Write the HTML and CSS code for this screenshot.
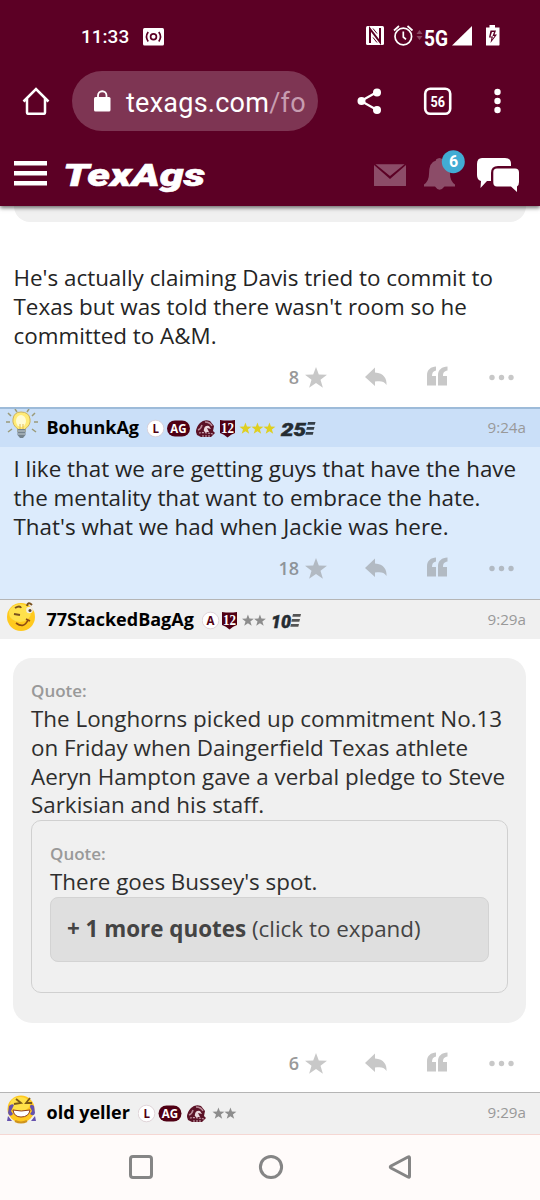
FILE: index.html
```html
<!DOCTYPE html>
<html lang="en">
<head>
<meta charset="utf-8">
<title>TexAgs</title>
<link rel="stylesheet" href="styles.css">
</head>
<body>
<svg class="defs" width="0" height="0">
  <defs>
    <path id="star" d="M11 0l2.800 7.600 8.200.2-6.500 5 2.400 7.900L11 16l-6.900 4.700 2.400-7.900L0 7.800l8.200-.2z"/>
    <g id="actions">
      <use href="#star" x="0" y="4"/>
      <path d="M60 14L70 4.500V9.500C79 10 82 16 81.500 22C79 18 76 18 70 18.500V23z"/>
      <path d="M122 22.500V12C122 7 126 3.500 131 3.500V7.500C128 8 127 10 127 13H131V22.500zM133 22.500V12C133 7 137 3.500 142.500 3.500V7.500C139 8 138 10 138 13H142V22.500z"/>
      <circle cx="187" cy="14.500" r="2.700"/><circle cx="196.500" cy="14.500" r="2.700"/><circle cx="206" cy="14.500" r="2.700"/>
    </g>
    <g id="ag"><rect width="23" height="16" rx="8" fill="#500014"/><text class="badge-text" x="11.500" y="12.200" font-size="11.500" fill="#fff">AG</text></g>
    <g id="disc"><circle cx="8.500" cy="8.500" r="8.300" fill="#fff" stroke="#d5c6cc" stroke-width=".7"/></g>
    <g id="shield"><path d="M0 1Q7.500 2 15 1V14Q11 15 7.500 18.500Q4 15 0 14z" fill="#500014"/><text class="serif-text" x="7.500" y="13.500" font-size="14" textLength="13" lengthAdjust="spacingAndGlyphs" fill="#fff">12</text></g>
    <g id="ring">
      <path d="M0 12Q0 7 4 3Q8-1 14 1L18 6L17 11L19 13L15 17H5L1 15z" fill="#5b1226"/>
      <path d="M2 10Q5 9 6 5M9 2Q14 2 16 6" fill="none" stroke="#b98b98" stroke-width="1.500"/>
      <path d="M8 9Q9 5 13 6L15 9L11 8L13 12L9 12Q7 11 8 9z" fill="#ead8dd"/>
      <path d="M3 13Q9 12 17 14M6 16h9" fill="none" stroke="#c9a5b0" stroke-width="1.200" stroke-dasharray="2 1"/>
    </g>
  </defs>
</svg>

<header class="top">
  <div class="status">
    <span class="clock">11:33</span>
    <svg class="cast" width="21" height="18" viewBox="0 0 21 18"><rect width="21" height="17.500" rx="1.500" fill="#fff"/><g fill="none" stroke="#5c0025" stroke-width="1.700"><circle cx="10.500" cy="8.700" r="2.900"/><path d="M5.200 4Q1.800 8.700 5.200 13.400M15.800 4Q19.200 8.700 15.800 13.400"/></g></svg>
    <svg class="system" width="140" height="30" viewBox="0 -1 140 30">
      <rect x="1" y="3" width="18" height="19" rx="1.500" fill="#fff"/>
      <path d="M5 20V6L15 19V5" fill="none" stroke="#5c0025" stroke-width="2"/><path d="M8 5.500L12 10.500M8 14.500L12 19.500" stroke="#5c0025" stroke-width="1"/>
      <g fill="none" stroke="#fff" stroke-width="1.700"><circle cx="38.300" cy="13.500" r="8.300"/><path d="M38.300 8.500V14L41 16.300M29 7.500L34 3M47.500 7.500L42.500 3"/></g>
      <path d="M51.500 11L54.500 7L57.500 11zM51.500 13L54.500 17L57.500 13z" fill="#8a4863"/>
      <text class="signal-text" x="59" y="23.300" textLength="24" lengthAdjust="spacingAndGlyphs">5G</text>
      <path d="M87 22.500L107 3V22.500z" fill="#fff"/>
      <path d="M121 4.500H124.500V2H130V4.500H134.500V21.500Q134.500 22.500 134 22.500H121.500Q121 22.500 121 22z" fill="#fff"/>
      <path d="M125.500 7.500H131L129.500 11.500H132L125.500 20L126.500 14.500H124z" fill="#5c0025"/><path d="M127 9H129L127.500 13H129.500L127.200 16.500L128 13.500H125.500z" fill="#fff"/>
    </svg>
  </div>
  <div class="browser">
    <svg width="28" height="28" viewBox="0 0 28 28" fill="none" stroke="#fff" stroke-width="2.500"><path d="M1.500 14.500L14 2L26.500 14.500M5 11.500V25.500Q5 26.800 6.300 26.800H21.700Q23 26.800 23 25.500V11.500"/></svg>
    <div class="url">
      <svg width="17" height="22" viewBox="0 0 17 22"><rect y="7" width="16.500" height="14.500" rx="1.500" fill="#fff"/><path d="M4 8V5.500a4.200 4.200 0 0 1 8.500 0V8" fill="none" stroke="#fff" stroke-width="1.800"/></svg>
      <span class="address">texags.com<span class="path">/fo</span></span>
    </div>
    <svg class="tools" width="150" height="30" viewBox="0 0 150 30">
      <path d="M22 6L6 15L22 24" fill="none" stroke="#fff" stroke-width="2.200"/>
      <g fill="#fff"><circle cx="22" cy="6.500" r="4"/><circle cx="6.500" cy="15" r="4"/><circle cx="22" cy="24" r="4"/><circle cx="142.500" cy="6" r="3.200"/><circle cx="142.500" cy="15" r="3.200"/><circle cx="142.500" cy="24" r="3.200"/></g>
      <rect x="70.200" y="2.700" width="25" height="25" rx="5" fill="none" stroke="#fff" stroke-width="2.600"/>
      <text class="tab-text" x="82.700" y="20.600" textLength="14.500" lengthAdjust="spacingAndGlyphs">56</text>
    </svg>
  </div>
  <div class="site">
    <svg width="33" height="25" viewBox="0 0 33 25" fill="#fff"><path d="M0 0h33v4.500H0zM0 10h33v4.500H0zM0 20h33v4.500H0z"/></svg>
    <svg class="logo" width="150" height="50" viewBox="0 0 150 50"><text x="1" y="37" textLength="142" lengthAdjust="spacingAndGlyphs">TexAgs</text></svg>
    <svg class="alerts" width="150" height="48" viewBox="0 0 150 48">
      <path d="M4 18L20 32L36 18V38.500Q36 39 35.500 39H4.500Q4 39 4 38.500z" fill="#8c4c68"/><path d="M5.500 17.300H34.500L20 29z" fill="#8c4c68"/>
      <path d="M54 37.500Q59 34 59 27Q59 15 66 13.500V12.500Q69.500 9.500 73 12.500V13.500Q80 15 80 27Q80 34 85 37.500V39.500H74.500Q69.500 46 65 39.500H54z" fill="#8c4c68"/>
      <circle cx="83.300" cy="14.700" r="11.500" fill="#42acd4"/><text class="count-text" x="83.700" y="20.300">6</text>
      <path d="M112 11H135Q141 11 141 17V19H128Q121 19 121 26V34H117L110.500 41L111 34Q107 33 107 28V17Q107 11 112 11z" fill="#fff"/>
      <path d="M127 21.500H145Q149 21.500 149 25.500V35Q149 38.500 147 39.500V45L141 39.500H127Q123.300 39.500 123.300 35.500V25Q123.300 21.500 127 21.500z" fill="#fff"/>
    </svg>
  </div>
</header>

<main>
  <article class="post first">
    <div class="quote-tail"></div>
    <p class="body">He's actually claiming Davis tried to commit to<br>Texas but was told there wasn't room so he<br>committed to A&amp;M.</p>
    <div class="actions"><span>8</span><svg width="209" height="28"><use href="#actions"/></svg></div>
  </article>

  <article class="post liked">
    <div class="byline">
      <svg class="avatar" width="32" height="32" viewBox="0 0 32 32"><g stroke="#9b9b79" stroke-width="1.500"><path d="M2 4l3 3M26 7l3-3M0 13h4M28 13h4M2 23l4-3M30 23l-4-3M9 0l2 3M23 0l-2 3"/></g><path d="M12 20Q6 16 7 10Q8 3 15 3Q23 3 24 10Q25 16 19 20V23H12z" fill="#ffeb78" stroke="#cfb35c"/><ellipse cx="15" cy="12" rx="5" ry="6" fill="#fffbd3"/><path d="M14 20V15M17 20V15" fill="none" stroke="#e3bb50"/><path d="M11.500 20H19.500V26L17 29H14L11.500 26z" fill="#75838d"/><path d="M12 22h7M12 25h7" stroke="#c8d0d4"/></svg>
      <b class="name">BohunkAg</b>
      <svg class="badges" width="180" height="24" viewBox="0 0 180 24"><use href="#disc" x="0" y="4"/><text class="badge-text" x="8.700" y="16.500" font-size="11.500" fill="#500014">L</text><use href="#ag" x="20" y="4.500"/><use href="#ring" x="49" y="4"/><use href="#shield" x="73" y="3"/><g fill="#dfcf20"><use href="#star" transform="translate(92.500 6.500) scale(.54)"/><use href="#star" transform="translate(104.500 6.500) scale(.54)"/><use href="#star" transform="translate(116.500 6.500) scale(.54)"/></g><text class="years-text" x="134" y="19.500" textLength="25" lengthAdjust="spacingAndGlyphs">25</text><path d="M161 6h7.500l-.7 2.800h-7.500zM160 11h7.500l-.7 2.800h-7.500zM159 16h7.500l-.7 2.800h-7.500z" fill="#35404a"/></svg>
      <time>9:24a</time>
    </div>
    <p class="body">I like that we are getting guys that have the have<br>the mentality that want to embrace the hate.<br>That's what we had when Jackie was here.</p>
    <div class="actions"><span>18</span><svg width="209" height="28"><use href="#actions"/></svg></div>
  </article>

  <article class="post quoted">
    <div class="byline">
      <svg class="avatar" width="32" height="32" viewBox="0 0 32 32"><circle cx="15" cy="16" r="14" fill="#ffc91e"/><ellipse cx="14" cy="12" rx="11" ry="9" fill="#ffe14c"/><path d="M10 22Q18 28 22 19M20 18L24 20" fill="none" stroke="#8e4b13" stroke-width="1.700"/><path d="M8 13L14 14M9 7Q14 4 15 7M21 5Q22 0 26 4" fill="none" stroke="#79511f" stroke-width="2"/><circle cx="23.500" cy="9" r="3.300" fill="#f2eee6"/><circle cx="24" cy="9.500" r="1.500" fill="#594231"/></svg>
      <b class="name">77StackedBagAg</b>
      <svg class="badges" width="110" height="24" viewBox="0 0 110 24"><use href="#disc" x="0" y="4"/><text class="badge-text" x="8.500" y="16.500" font-size="11.500" fill="#500014">A</text><use href="#shield" x="20" y="3"/><g fill="#8d8d8d"><use href="#star" transform="translate(40 6.500) scale(.54)"/><use href="#star" transform="translate(52 6.500) scale(.54)"/></g><text class="years-text" x="69" y="19.500" textLength="20" lengthAdjust="spacingAndGlyphs">10</text><path d="M91 6h8l-.7 2.800h-8zM90 11h8l-.7 2.800h-8zM89 16h8l-.7 2.800h-8z" fill="#555"/></svg>
      <time>9:29a</time>
    </div>
    <blockquote class="quote">
      <div class="label">Quote:</div>
      <p>The Longhorns picked up commitment No.13<br>on Friday when Daingerfield Texas athlete<br>Aeryn Hampton gave a verbal pledge to Steve<br>Sarkisian and his staff.</p>
      <blockquote class="nested">
        <div class="label">Quote:</div>
        <p>There goes Bussey's spot.</p>
        <div class="more"><b>+ 1 more quotes</b> (click to expand)</div>
      </blockquote>
    </blockquote>
    <div class="actions"><span>6</span><svg width="209" height="28"><use href="#actions"/></svg></div>
  </article>

  <article class="post last">
    <div class="byline">
      <svg class="avatar" width="32" height="32" viewBox="0 0 32 32"><circle cx="15" cy="15" r="13.500" fill="#ffc81f"/><ellipse cx="14" cy="10" rx="10" ry="7" fill="#ffe149"/><path d="M10 5L15 9L8 10M24 4L20 9L26 9" fill="none" stroke="#7c5a17" stroke-width="1.800"/><path d="M7 16Q15 18 24 16Q23 23 15 23Q8 23 7 16z" fill="#fff" stroke="#91401d"/><path d="M3 12Q6 9 8 11L5 17L7 20Q4 24 2 19zM28 12Q24 9 24 13L26 17L24 20Q28 23 29 19zM2 22L6 27L1 27zM29 22L25 27H30z" fill="#6552ad"/><path d="M9 27Q15 30 21 27" stroke="#cf941d" stroke-width="2" fill="none"/></svg>
      <b class="name">old yeller</b>
      <svg class="badges" width="110" height="24" viewBox="0 0 110 24"><use href="#disc" x="0" y="4"/><text class="badge-text" x="8.700" y="16.500" font-size="11.500" fill="#500014">L</text><use href="#ag" x="20.500" y="4.500"/><use href="#ring" x="49" y="4"/><g fill="#8d8d8d"><use href="#star" transform="translate(74.500 6.500) scale(.54)"/><use href="#star" transform="translate(86.500 6.500) scale(.54)"/></g></svg>
      <time>9:29a</time>
    </div>
  </article>
</main>

<nav class="system-nav">
  <svg width="26" height="26" viewBox="0 0 26 26"><rect x="2.500" y="2.500" width="21" height="21" rx="2.500"/></svg>
  <svg width="26" height="26" viewBox="0 0 26 26"><circle cx="13" cy="13" r="10.600"/></svg>
  <svg width="26" height="26" viewBox="0 0 26 26"><path d="M22.500 3.800V22.200Q22.500 23.800 21 23L4 14Q2.500 13 4 12L21 3Q22.500 2.200 22.500 3.800z"/></svg>
</nav>
</body>
</html>
```
FILE: styles.css
```css
* { box-sizing: border-box; }
body { margin: 0; width: 540px; height: 1200px; overflow: hidden; background: #fff; color: #242424; font-family: "Open Sans", sans-serif; }
p, blockquote { margin: 0; }
svg { display: block; flex: none; }
.defs { position: absolute; }

.top { position: relative; height: 206px; background: #5c0025; color: #fff; box-shadow: 0 2px 4px rgba(0, 0, 0, .55); }
.status { display: flex; align-items: center; height: 71px; padding: 2px 35px 0 81px; }
.clock { font: 500 19px/24px Roboto, sans-serif; width: 61.500px; }
.system { margin-left: auto; }
.browser { display: flex; align-items: center; height: 60px; padding-left: 22px; }
.url { display: flex; align-items: center; width: 246px; height: 60px; margin-left: 22px; padding-left: 22px; border-radius: 30px; background: #7e3553; }
.address { margin-left: 15px; padding-top: 3px; font: 27px/32px Roboto, sans-serif; white-space: nowrap; letter-spacing: .25px; }
.path { color: #c79cb0; }
.tools { margin-left: 37px; }
.site { display: flex; align-items: center; height: 75px; padding: 12px 20px 0 14px; }
.site > svg:first-child { margin-bottom: 2px; }
.logo { margin: -2px 0 0 15px; }
.logo text { font: italic 900 32px Roboto, sans-serif; fill: #fff; stroke: #fff; stroke-width: .6px; }
.alerts { margin: -7px 0 0 auto; }
.signal-text { font: 700 22px Roboto, sans-serif; fill: #fff; }
.tab-text { font: 700 15.500px Roboto, sans-serif; fill: #fff; text-anchor: middle; }
.count-text { font: 700 16px Roboto, sans-serif; fill: #fff; text-anchor: middle; }

.post { display: flow-root; }
.first { height: 201px; }
.quote-tail { height: 16px; margin: 0 14px; background: #f0f0f0; border-radius: 0 0 18px 18px; }
.body { padding-left: 13.500px; font-size: 22.400px; line-height: 28.800px; white-space: nowrap; }
.first .body { padding-top: 42px; }
.actions { display: flex; align-items: center; justify-content: flex-end; height: 28px; margin: 13px 26px 0 0; color: #999; font-size: 18px; font-weight: 600; }
.actions svg { margin-left: 6px; fill: #c8c8c8; }
.byline { display: flex; align-items: center; height: 40px; padding: 0 14px 1px 6px; border-top: 1px solid #b5b5b5; background: #f0f0f0; }
.avatar { margin-top: -4px; }
.name { margin-left: 8.500px; color: #000; font-size: 18px; line-height: 26px; white-space: nowrap; }
.badges { margin: 1px 0 0 8px; }
.byline time { margin-left: auto; color: #999; font-size: 15.200px; }
.badge-text { font-family: "Open Sans", sans-serif; font-weight: 700; text-anchor: middle; }
.serif-text { font-family: "Liberation Serif", serif; font-weight: 700; text-anchor: middle; }
.years-text { font: italic 900 19px Roboto, sans-serif; fill: #252c32; stroke: #252c32; stroke-width: .5px; }
.liked { height: 192px; background: #dcebfc; }
.liked .byline { background: #cadff8; border-top: 2px solid #9dbbd9; padding-bottom: 2px; }
.liked .body { padding-top: 8px; }
.liked .actions { color: #8e9499; }
.liked .actions svg { fill: #b2bac3; }
.quoted { height: 493px; }
.quote { height: 365px; margin: 19px 14px 0 13px; padding: 19px 18px 0; border-radius: 19px; background: #f0f0f0; font-size: 22.400px; line-height: 28.800px; white-space: nowrap; color: #2e2e2e; }
.label { padding-top: 1px; color: #999; font-size: 17px; line-height: 26px; font-weight: 600; }
.label + p { padding-top: 1px; }
.nested { height: 173px; padding: 19px 18px 0; border: 1px solid #d0d0d0; border-radius: 10px; }
.more { height: 65px; padding: 17px 16px; border: 1px solid #d3d3d3; border-radius: 8px; background: #dfdfdf; color: #444; }
.quoted .actions { margin-top: 26px; }
.last { height: 42px; background: #f0f0f0; }
.system-nav { display: flex; justify-content: space-between; height: 66px; padding: 19px 127px 0 128px; border-top: 1px solid #f5d7d3; background: #fffbfa; }
.system-nav svg { fill: none; stroke: #858585; stroke-width: 3px; }
```
